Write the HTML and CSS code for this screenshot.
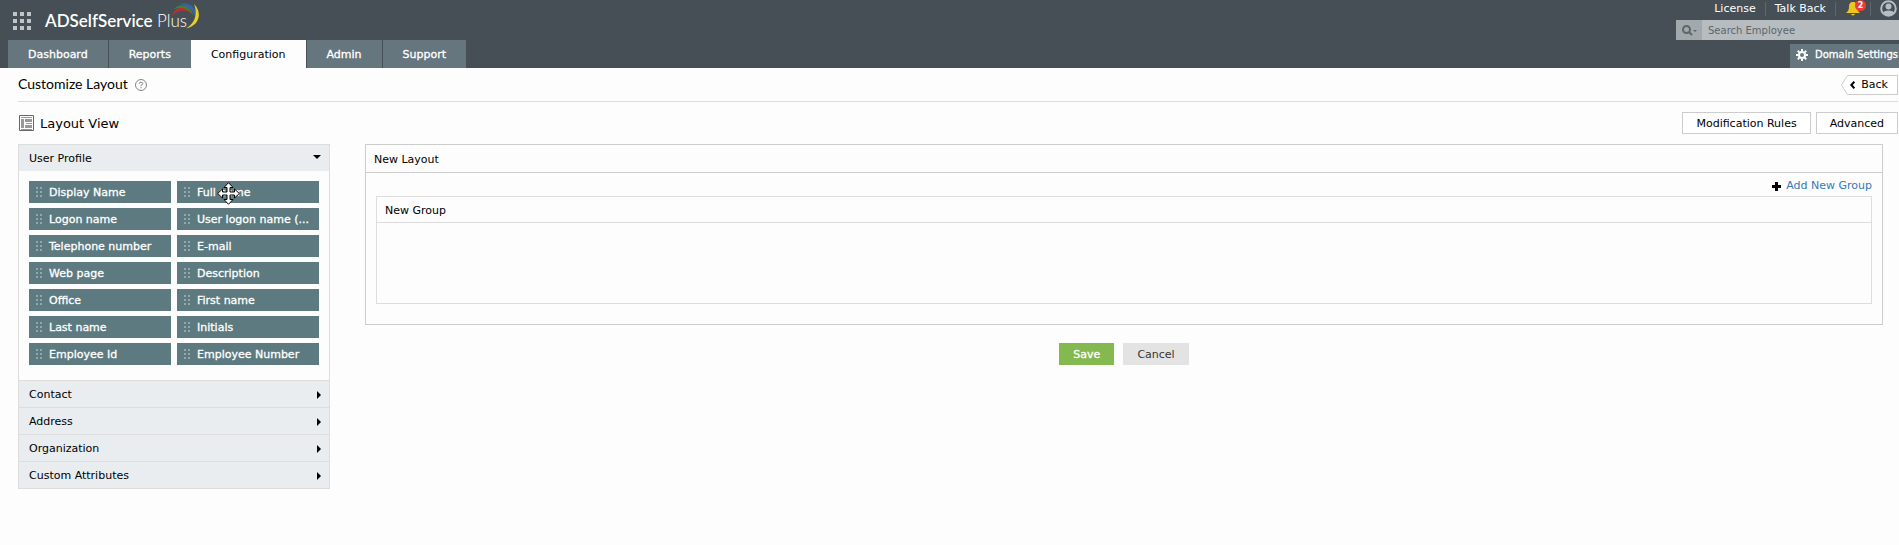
FILE: index.html
```html
<!DOCTYPE html>
<html lang="en">
<head>
<meta charset="utf-8">
<title>ADSelfService Plus - Customize Layout</title>
<link rel="stylesheet" href="styles.css">
</head>
<body>
<header class="header">
  <div class="header-left">
    <div class="brand">
      <svg class="apps" viewBox="0 0 18 18" aria-hidden="true"><path d="M0 0h4v4H0zM7 0h4v4H7zM14 0h4v4h-4zM0 7h4v4H0zM7 7h4v4H7zM14 7h4v4h-4zM0 14h4v4H0zM7 14h4v4H7zM14 14h4v4h-4z"/></svg>
      <div class="logo">
        <b>ADSelfService</b> <span>Plus</span>
        <svg class="swoosh" viewBox="0 0 30 28" aria-hidden="true">
          <path d="M2 14C5 4 17 3 22 12C16 7 8 7 2 14Z" fill="#c9292b"/>
          <path d="M3 8C9 0 21 2 23.500 14C18 6 11 4 3 8Z" fill="#3c8045"/>
          <path d="M9 2C20-1 28 6 26 18C24 9 18 3 9 2Z" fill="#3565a8"/>
          <path d="M24 2C33 11 29 24 16 26.500C25 21 28 12 24 2Z" fill="#f0cf20"/>
        </svg>
      </div>
    </div>
    <nav class="tabs">
      <a href="#" class="tab">Dashboard</a>
      <a href="#" class="tab">Reports</a>
      <a href="#" class="tab active">Configuration</a>
      <a href="#" class="tab">Admin</a>
      <a href="#" class="tab">Support</a>
    </nav>
  </div>
  <div class="header-right">
    <div class="links">
      <a href="#">License</a><i class="sep"></i><a href="#">Talk Back</a><i class="sep"></i>
      <button class="bell" aria-label="Notifications">
        <svg viewBox="0 0 14 14" aria-hidden="true"><path d="M7 0C4 0 3 2 3 5C3 8 2 9 0 11H14C12 9 11 8 11 5C11 2 10 0 7 0ZM5 12H9Q7 15 5 12Z" fill="#ecc81f"/></svg>
        <span class="badge">2</span>
      </button>
      <i class="sep"></i>
      <button class="user" aria-label="Account"><svg viewBox="0 0 17 17" aria-hidden="true"><circle cx="8.500" cy="8.500" r="7.300" fill="none" stroke="#b4bdc2" stroke-width="2"/><circle cx="8.500" cy="6.500" r="3" fill="#b4bdc2"/><path d="M3 13C4 9.800 13 9.800 14 13Q8.500 18 3 13Z" fill="#b4bdc2"/></svg></button>
    </div>
    <div class="search">
      <button class="search-type" aria-label="Search type"><svg viewBox="0 0 15 11" aria-hidden="true"><circle cx="4.500" cy="4.500" r="3.500" fill="none" stroke="#5c666b" stroke-width="2"/><path d="M7 7L10 10" stroke="#5c666b" stroke-width="2"/><path d="M11 5h4l-2 2z" fill="#5c666b"/></svg></button>
      <input type="text" placeholder="Search Employee" aria-label="Search Employee">
    </div>
    <button class="domain"><svg viewBox="0 0 12 12" aria-hidden="true"><circle cx="6" cy="6" r="3" fill="none" stroke="#fff" stroke-width="2"/><path d="M6 0v2M6 10v2M0 6h2M10 6h2M1.800 1.800l1.400 1.400M8.800 8.800l1.400 1.400M1.800 10.200l1.400-1.400M8.800 3.200l1.400-1.400" stroke="#fff" stroke-width="2"/></svg>Domain Settings</button>
  </div>
</header>

<main class="page">
  <div class="title-bar">
    <h1>Customize Layout</h1>
    <button class="help" aria-label="Help"><svg viewBox="0 0 12 12" aria-hidden="true"><circle cx="6" cy="6" r="5.500" fill="none" stroke="#858585"/><path d="M4.200 4.800Q4.200 3.200 6 3.200T7.800 4.700Q7.800 5.500 6 6.300V7.200M6 8v1.200" fill="none" stroke="#858585"/></svg></button>
    <a href="#" class="back">
      <svg class="back-shape" viewBox="0 0 8 20" aria-hidden="true"><path d="M8 .5H6.500L.5 10L6.500 19.500H8" fill="#fff" stroke="#ccc"/></svg>
      <span><svg class="chev" viewBox="0 0 5 8" aria-hidden="true"><path d="M4.300 .7L1.300 4L4.300 7.300" fill="none" stroke="#000" stroke-width="2"/></svg>Back</span>
    </a>
  </div>
  <div class="view-bar">
    <svg class="view-icon" viewBox="0 0 15 16" aria-hidden="true"><path d="M.5 .5h14v15H.5z" fill="#fff" stroke="#666"/><path d="M2 2h11v1H2zM2 4h3v9H2zM6 4h7v3H6zM7 8h6v1H7zM6 10h7v3H6zM2 14h11v1H2z" fill="#999"/></svg>
    <h2>Layout View</h2>
    <button class="outline">Modification Rules</button>
    <button class="outline">Advanced</button>
  </div>
  <div class="columns">
    <aside class="sidebar">
      <button class="section open">User Profile<svg class="down" viewBox="0 0 8 4" aria-hidden="true"><path d="M0 0h8L4 4z"/></svg></button>
      <ul class="chips">
        <li>Display Name</li><li>Full name
          <svg class="cursor" viewBox="0 0 23 23" aria-hidden="true"><path d="M11.500 .7L16 5.500H13V10H17.500V7L22.300 11.500L17.500 16V13H13V17.500H16L11.500 22.300L7 17.500H10V13H5.500V16L.7 11.500L5.500 7V10H10V5.500H7Z" fill="#fff" stroke="#000"/></svg></li>
        <li>Logon name</li><li>User logon name (...</li>
        <li>Telephone number</li><li>E-mail</li>
        <li>Web page</li><li>Description</li>
        <li>Office</li><li>First name</li>
        <li>Last name</li><li>Initials</li>
        <li>Employee Id</li><li>Employee Number</li>
      </ul>
      <button class="section">Contact<svg class="right" viewBox="0 0 4 8" aria-hidden="true"><path d="M0 0v8L4 4z"/></svg></button>
      <button class="section">Address<svg class="right" viewBox="0 0 4 8" aria-hidden="true"><path d="M0 0v8L4 4z"/></svg></button>
      <button class="section">Organization<svg class="right" viewBox="0 0 4 8" aria-hidden="true"><path d="M0 0v8L4 4z"/></svg></button>
      <button class="section">Custom Attributes<svg class="right" viewBox="0 0 4 8" aria-hidden="true"><path d="M0 0v8L4 4z"/></svg></button>
    </aside>
    <section class="editor">
      <div class="panel">
        <h3>New Layout</h3>
        <div class="panel-body">
          <a href="#" class="add"><svg viewBox="0 0 9 9" aria-hidden="true"><path d="M3 0h3v3h3v3H6v3H3V6H0V3h3z"/></svg>Add New Group</a>
          <div class="group">
            <h4>New Group</h4>
            <div class="drop"></div>
          </div>
        </div>
      </div>
      <div class="actions">
        <button class="save">Save</button>
        <button class="cancel">Cancel</button>
      </div>
    </section>
  </div>
</main>
</body>
</html>
```
FILE: styles.css
```css
* { box-sizing: border-box; }
body {
  margin: 0;
  background: #fdfdfd;
  color: #000;
  font: 11px/16px Verdana, "DejaVu Sans", sans-serif;
}
button, input { font: inherit; color: inherit; border: 0; padding: 0; margin: 0; background: none; border-radius: 0; }
button { cursor: pointer; white-space: nowrap; }
a { color: inherit; text-decoration: none; }
h1, h2, h3, h4, ul { margin: 0; padding: 0; font-weight: normal; }
svg { display: block; flex: none; }

.header { display: flex; justify-content: space-between; background: #454f55; color: #fff; }
.header-left { display: flex; flex-direction: column; padding-left: 8px; }
.brand { display: flex; align-items: center; height: 40px; padding: 2px 0 0 5px; }
.apps { width: 18px; height: 18px; fill: #c0c5c8; }
.logo { position: relative; margin-left: 14px; font: 17px/24px Lato, sans-serif; }
.logo b { font-weight: 600; }
.logo span { font-weight: 300; }
.swoosh { position: absolute; right: -13px; top: -7px; width: 30px; height: 28px; }
.tabs { display: flex; }
.tab { height: 28px; padding: 2px 20px 0; line-height: 26px; background: #66767f; -webkit-text-stroke: 0.3px; }
.tab + .tab { margin-left: 1px; }
.tab + .tab.active { margin-left: 0; background: #fdfdfd; color: #000; -webkit-text-stroke: 0; }

.header-right { display: flex; flex-direction: column; align-items: flex-end; width: 223px; }
.links { display: flex; align-items: center; height: 17px; margin-bottom: 3px; }
.sep { width: 1px; height: 14px; margin: 0 9px; background: #5d676c; }
.bell { position: relative; margin-left: 1px; }
.bell svg { width: 14px; height: 14px; }
.badge { position: absolute; left: 9px; top: -2px; width: 11px; height: 11px; border-radius: 6px; background: #ee3b3b; font-size: 8px; font-weight: bold; line-height: 11px; }
.bell + .sep { margin-left: 10px; }
.user svg { width: 17px; height: 17px; }
.user { margin-right: 2px; }
.search { display: flex; width: 100%; height: 20px; margin-bottom: 4px; background: #b7bcc0; }
.search-type { display: flex; align-items: center; justify-content: center; width: 26px; background: #a2a9ad; }
.search-type svg { width: 15px; height: 11px; }
.search input { flex: 1; min-width: 0; padding: 2px 6px 0; font-size: 10px; }
.search input::placeholder { color: #5c666b; opacity: 1; }
.domain { display: flex; align-items: center; gap: 7px; height: 24px; padding: 0 1px 2px 6px; background: #66767f; font-size: 10px; -webkit-text-stroke: 0.3px; }
.domain svg { width: 12px; height: 12px; }

.page { padding: 0 1px 0 18px; }
.title-bar { display: flex; align-items: center; height: 34px; border-bottom: 1px solid #ddd; }
h1 { padding-bottom: 1px; font: 14px/20px Lato, sans-serif; }
.help { margin-left: 7px; }
.help svg { width: 12px; height: 12px; }
.back { display: flex; margin-left: auto; }
.back-shape { width: 8px; height: 20px; }
.back span { display: flex; align-items: center; gap: 6px; height: 20px; padding: 1px 9px 0 1px; border: 1px solid #ccc; border-left: 0; background: #fff; }
.chev { width: 5px; height: 8px; }

.view-bar { display: flex; align-items: center; gap: 5px; padding: 10px 0; }
.view-icon { width: 17px; height: 16px; }
h2 { margin-right: auto; padding-top: 1px; font-size: 13px; }
.outline { height: 22px; padding: 1px 13px 0; border: 1px solid #ccc; background: #fff; }

.columns { display: flex; align-items: flex-start; gap: 35px; padding-right: 15px; }
.sidebar { flex: none; width: 312px; border: 1px solid #ddd; }
.section { display: flex; align-items: center; justify-content: space-between; width: 100%; height: 27px; padding: 1px 8px 0 10px; border-top: 1px solid #ddd; background: #e9edf0; }
.section.open { height: 26px; padding-top: 2px; border-top: 0; }
.down { width: 8px; height: 4px; margin-bottom: 5px; }
.right { width: 4px; height: 8px; }
.section svg { fill: #000; }
.chips { display: grid; grid-template-columns: 1fr 1fr; gap: 5px 6px; padding: 10px 10px 15px; list-style: none; }
.chips li { position: relative; height: 22px; padding: 2px 0 0 20px; white-space: nowrap; line-height: 20px; background: #5c7a80; color: #fff; -webkit-text-stroke: 0.3px; }
.chips li::before { content: ""; position: absolute; left: 7px; top: 6px; width: 6px; height: 10px; background: conic-gradient(at 2px 2px, transparent 75%, #93a7ac 0) 0 0 / 4px 4px; }
.cursor { position: absolute; left: 40px; top: 1px; width: 23px; height: 23px; }

.editor { flex: 1; min-width: 0; }
.panel { border: 1px solid #ccc; }
h3 { padding: 7px 8px 4px; border-bottom: 1px solid #ccc; font-size: 11px; }
.panel-body { padding: 5px 10px 20px; }
.add { display: flex; align-items: center; gap: 5px; width: max-content; margin-left: auto; color: #337ab7; }
.group { margin-top: 2px; border: 1px solid #ddd; }
h4 { padding: 6px 8px 3px; border-bottom: 1px solid #ddd; font-size: 11px; }
.add svg { width: 9px; height: 9px; fill: #000; }
.drop { min-height: 80px; }
.actions { display: flex; justify-content: center; gap: 9px; padding-top: 18px; }
.actions button { height: 22px; padding: 1px 14px 0; }
.save { background: #83b94e; color: #fff; -webkit-text-stroke: 0.3px; }
.actions .cancel { background: #e3e3e3; color: #333; }
```
